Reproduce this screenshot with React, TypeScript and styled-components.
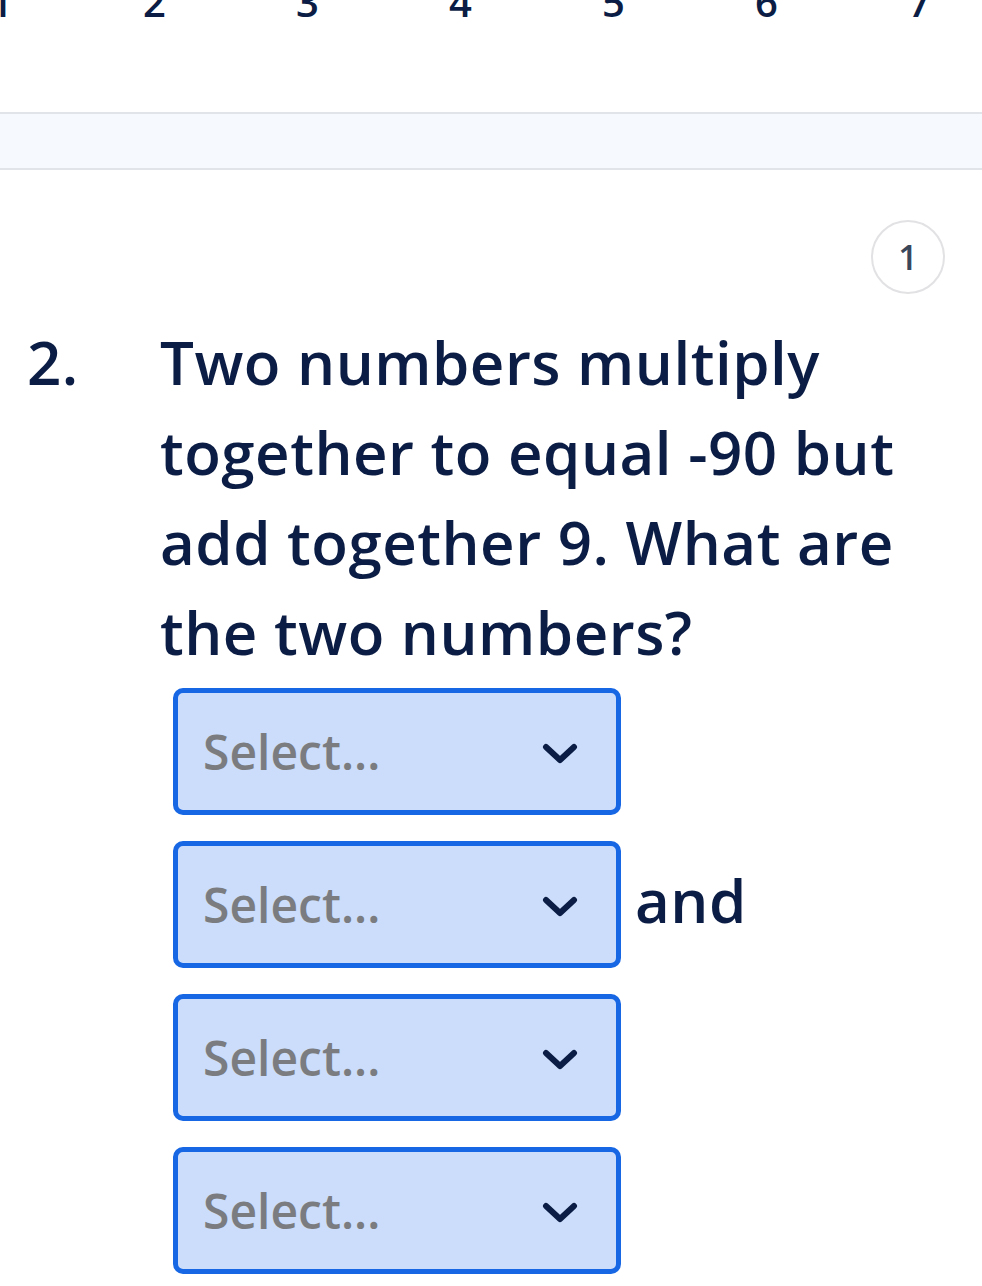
import React from "react";
import styled, { createGlobalStyle } from "styled-components";

const GlobalStyle = createGlobalStyle`
  html, body {
    margin: 0;
    padding: 0;
    background: #ffffff;
  }
  body {
    font-family: "Open Sans", "Noto Sans", sans-serif;
    color: #0b1d44;
    overflow: hidden;
  }
`;

const steps = [1, 2, 3, 4, 5, 6, 7];
const answers = ["Select...", "Select...", "Select...", "Select..."];

const App: React.FC = () => {
  return (
    <>
      <GlobalStyle />
      <Page>
        <ScaleRow>
          {steps.map((n) => (
            <ScaleStep key={n}>{n}</ScaleStep>
          ))}
        </ScaleRow>
        <Band />
        <BadgeRow>
          <Badge>1</Badge>
        </BadgeRow>
        <Question>
          <QuestionNumber>2.</QuestionNumber>
          <QuestionBody>
            <QuestionText>
              Two numbers multiply together to equal -90 but add together 9.
              What are the two numbers?
            </QuestionText>
            <Answers>
              {answers.map((label, idx) => (
                <AnswerRow key={idx}>
                  <SelectBox>
                    <Placeholder>{label}</Placeholder>
                    <Chevron viewBox="0 0 36 22">
                      <path d="M4 4 L18 17 L32 4" />
                    </Chevron>
                  </SelectBox>
                  {idx === 1 && <Joiner>and</Joiner>}
                </AnswerRow>
              ))}
            </Answers>
          </QuestionBody>
        </Question>
      </Page>
    </>
  );
};

export default App;

const Page = styled.div`
  width: 982px;
  height: 1286px;
  overflow: hidden;
`;

const ScaleRow = styled.div`
  display: flex;
  height: 40px;
  margin: -18px 0 0 -75px;
`;

const ScaleStep = styled.div`
  width: 153px;
  flex: none;
  text-align: center;
  font-size: 40px;
  font-weight: 600;
  line-height: 40px;
`;

const Band = styled.div`
  margin-top: 90px;
  height: 54px;
  background: #f6f9fe;
  border-top: 2px solid #e1e4e9;
  border-bottom: 2px solid #e1e4e9;
`;

const BadgeRow = styled.div`
  display: flex;
  justify-content: flex-end;
  padding: 50px 37px 0 0;
`;

const Badge = styled.div`
  width: 70px;
  height: 70px;
  border: 2px solid #e2e2e4;
  border-radius: 50%;
  display: flex;
  align-items: center;
  justify-content: center;
  font-size: 34px;
  font-weight: 600;
  color: #3a475b;
`;

const Question = styled.div`
  display: flex;
  margin-top: 23px;
`;

const QuestionNumber = styled.div`
  width: 133px;
  padding-left: 27px;
  flex: none;
  font-size: 60px;
  font-weight: 600;
  line-height: 90px;
  letter-spacing: 0.5px;
`;

const QuestionBody = styled.div`
  width: 785px;
`;

const QuestionText = styled.div`
  font-size: 60px;
  font-weight: 600;
  line-height: 90px;
  letter-spacing: 0.5px;
`;

const Answers = styled.div`
  display: flex;
  flex-direction: column;
  gap: 26px;
  margin: 11px 0 0 13px;
`;

const AnswerRow = styled.div`
  display: flex;
  align-items: baseline;
  gap: 14px;
`;

const SelectBox = styled.div`
  width: 448px;
  height: 127px;
  box-sizing: border-box;
  border: 5px solid #1767e5;
  border-radius: 10px;
  background: #cbddfa;
  display: flex;
  align-items: center;
  justify-content: space-between;
  padding: 0 38px 0 25px;
`;

const Placeholder = styled.span`
  font-size: 48px;
  font-weight: 600;
  color: #7a7c80;
`;

const Chevron = styled.svg`
  width: 36px;
  height: 22px;
  margin-top: 4px;
  fill: none;
  stroke: #0b1d44;
  stroke-width: 6;
  stroke-linecap: round;
  stroke-linejoin: round;
`;

const Joiner = styled.span`
  font-size: 60px;
  font-weight: 600;
  letter-spacing: 0.5px;
`;
